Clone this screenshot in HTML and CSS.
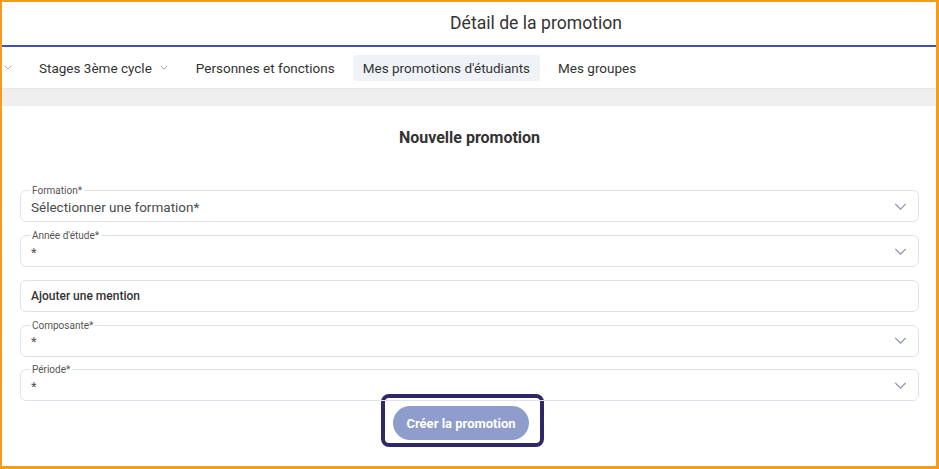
FILE: index.html
```html
<!DOCTYPE html>
<html lang="fr">
<head>
<meta charset="utf-8">
<title>Détail de la promotion</title>
<link rel="stylesheet" href="styles.css">
</head>
<body>
<div class="frame">
  <header class="topbar">
    <h1 class="page-title">Détail de la promotion</h1>
  </header>
  <nav class="tabs">
    <span class="tab tab-cut"><svg class="chev-sm" viewBox="0 0 10 6"><path d="M1 1l4 4 4-4" fill="none" stroke="#9aa3b5" stroke-width="1.2"/></svg></span>
    <span class="tab">Stages 3ème cycle <svg class="chev-sm" viewBox="0 0 10 6"><path d="M1 1l4 4 4-4" fill="none" stroke="#9aa3b5" stroke-width="1.2"/></svg></span>
    <span class="tab">Personnes et fonctions</span>
    <span class="tab tab-active">Mes promotions d'étudiants</span>
    <span class="tab">Mes groupes</span>
  </nav>
  <div class="band"></div>
  <main class="content">
    <h2 class="form-title">Nouvelle promotion</h2>
    <form class="form">
      <div class="field">
        <span class="field-label">Formation*</span>
        <span class="field-value placeholder">Sélectionner une formation*</span>
        <svg class="chev" viewBox="0 0 14 8"><path d="M1 1l6 6 6-6" fill="none" stroke="#8792a8" stroke-width="1.4"/></svg>
      </div>
      <div class="field">
        <span class="field-label">Année d'étude*</span>
        <span class="field-value star">*</span>
        <svg class="chev" viewBox="0 0 14 8"><path d="M1 1l6 6 6-6" fill="none" stroke="#8792a8" stroke-width="1.4"/></svg>
      </div>
      <div class="field">
        <span class="field-value mention">Ajouter une mention</span>
      </div>
      <div class="field">
        <span class="field-label">Composante*</span>
        <span class="field-value star">*</span>
        <svg class="chev" viewBox="0 0 14 8"><path d="M1 1l6 6 6-6" fill="none" stroke="#8792a8" stroke-width="1.4"/></svg>
      </div>
      <div class="field">
        <span class="field-label">Période*</span>
        <span class="field-value star">*</span>
        <svg class="chev" viewBox="0 0 14 8"><path d="M1 1l6 6 6-6" fill="none" stroke="#8792a8" stroke-width="1.4"/></svg>
      </div>
      <div class="actions">
        <span class="highlight"><button type="button" class="btn">Créer la promotion</button></span>
      </div>
    </form>
  </main>
</div>
</body>
</html>
```

FILE: styles.css
```css
* { box-sizing: border-box; }
html, body { margin: 0; padding: 0; background: #fff; }
body { font-family: Roboto, "Liberation Sans", sans-serif; color: #333; }

.frame {
  width: 939px;
  height: 469px;
  border-style: solid;
  border-color: #f59c1a;
  border-width: 2px 3px 3px 2px;
  overflow: hidden;
  display: flex;
  flex-direction: column;
}

.topbar {
  height: 45px;
  border-bottom: 2px solid #3f51b5;
  display: flex;
  align-items: center;
  justify-content: center;
  padding-left: 134px;
  padding-bottom: 2px;
}
.page-title {
  margin: 0;
  font-size: 17.6px;
  font-weight: 400;
  color: #333;
}

.tabs {
  height: 41px;
  display: flex;
  align-items: center;
  gap: 8px;
}
.tab {
  display: inline-flex;
  align-items: center;
  height: 26px;
  padding: 0 10px;
  font-size: 13.5px;
  color: #333;
  border-radius: 3px;
  white-space: nowrap;
}
.tab-cut { padding: 0 2px; width: 19px; }
.chev-sm { width: 8px; height: 5px; margin-left: 8px; }
.tab-cut .chev-sm { margin-left: 0; }
.tab-active { background: #eff3f8; }

.band {
  height: 18px;
  background: #efefef;
  border-top: 1px solid #e6e6e6;
}

.content {
  flex: 1;
  padding: 0 17px 0 18px;
}
.form-title {
  margin: 22px 0 0;
  height: 20px;
  line-height: 20px;
  text-align: center;
  font-size: 16px;
  font-weight: 700;
  color: #333;
}

.form {
  margin-top: 42px;
  display: flex;
  flex-direction: column;
  gap: 13px;
}
.field {
  position: relative;
  height: 32px;
  border: 1px solid #dde3ed;
  border-radius: 6px;
  display: flex;
  align-items: center;
  padding: 0 10px;
}
.field:nth-child(n+4) { margin-top: -0.5px; }
.field-label {
  position: absolute;
  top: -6px;
  left: 9px;
  padding: 0 2px;
  background: #fff;
  font-size: 10px;
  line-height: 12px;
  color: #555;
}
.field-value { flex: 1; }
.placeholder { font-size: 13.5px; color: #4a4a4a; padding-top: 2px; }
.star { font-size: 13px; color: #555; padding-top: 2px; }
.mention { font-size: 12px; font-weight: 500; color: #333; }
.chev { width: 13px; height: 7px; margin-right: 1px; }

.actions {
  margin-top: -20px;
  padding-left: 361px;
  display: flex;
}
.highlight {
  display: inline-flex;
  border: 4px solid #2e2869;
  border-radius: 8px;
  background: #fff;
  padding: 8px 11px 3px 8px;
}
.btn {
  height: 34px;
  width: 136px;
  border: none;
  border-radius: 17px;
  background: #8e9dcb;
  color: #fff;
  font-family: Roboto, "Liberation Sans", sans-serif;
  font-weight: 700;
  font-size: 13px;
  padding: 0;
}
```
